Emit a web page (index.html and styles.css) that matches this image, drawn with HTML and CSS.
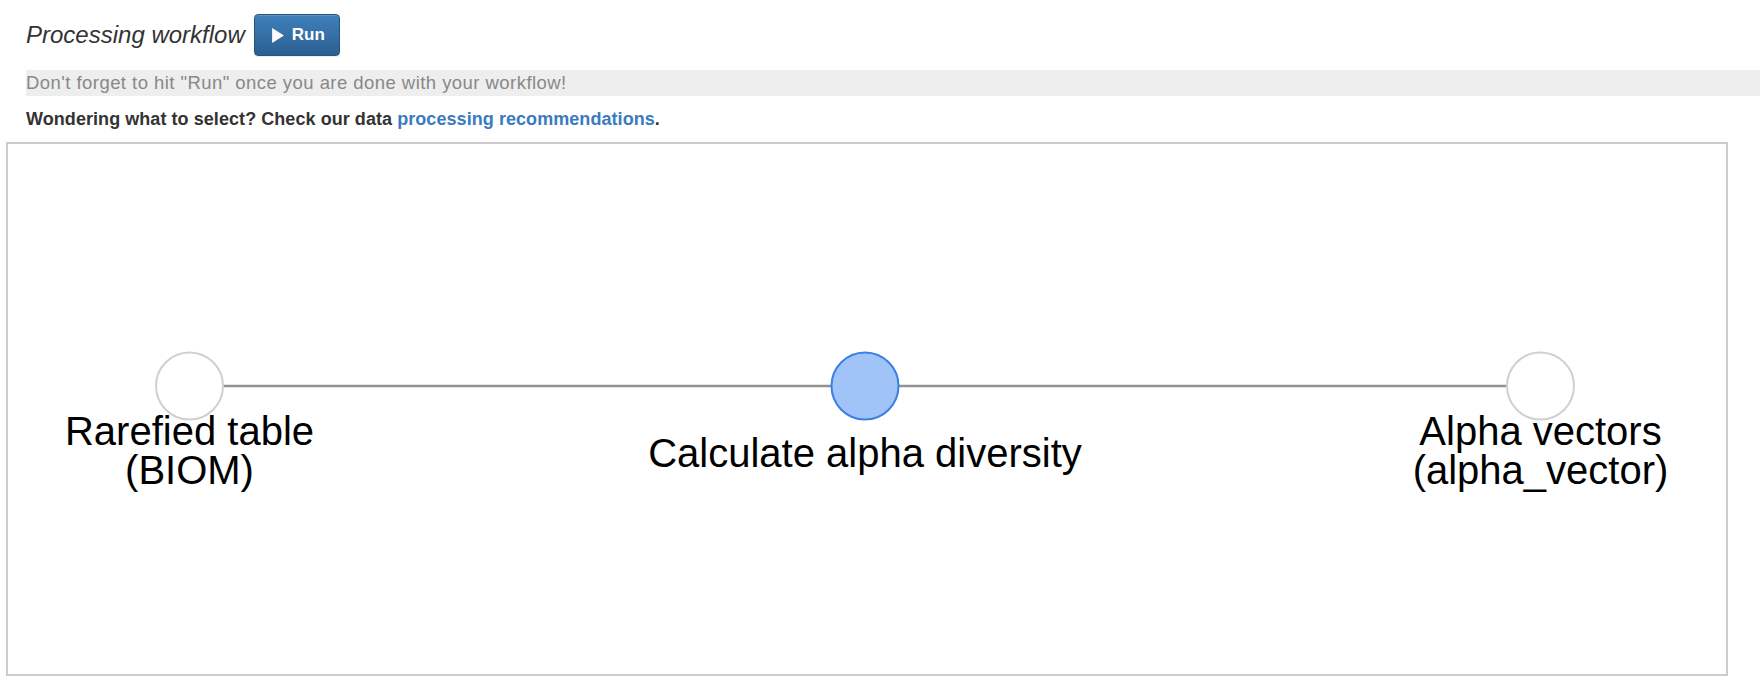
FILE: index.html
```html
<!DOCTYPE html>
<html>
<head>
<meta charset="utf-8">
<title>Processing workflow</title>
<link rel="stylesheet" href="styles.css">
</head>
<body>
<div class="page">
  <div class="header">
    <span class="title">Processing workflow</span>
    <button class="btn-run" type="button"><svg class="play" viewBox="0 0 11 14" width="12" height="15"><polygon points="0,0 11,7 0,14"/></svg><span>Run</span></button>
  </div>
  <div class="notice">Don't forget to hit "Run" once you are done with your workflow!</div>
  <p class="hint">Wondering what to select? Check our data <a href="#">processing recommendations</a>.</p>
</div>
<div class="graph">
  <svg class="graph-svg" viewBox="0 0 1718 530" width="1718" height="530">
    <line class="edge" x1="181.5" y1="242" x2="857" y2="242"/>
    <line class="edge" x1="857" y1="242" x2="1532.5" y2="242"/>
    <circle class="node" cx="181.5" cy="242" r="33.5"/>
    <circle class="node node-active" cx="857" cy="242" r="33.5"/>
    <circle class="node" cx="1532.5" cy="242" r="33.5"/>
    <text class="label" x="181.5" y="301">Rarefied table</text>
    <text class="label" x="181.5" y="340">(BIOM)</text>
    <text class="label" x="857" y="323">Calculate alpha diversity</text>
    <text class="label" x="1532.5" y="301">Alpha vectors</text>
    <text class="label" x="1532.5" y="340">(alpha_vector)</text>
  </svg>
</div>
</body>
</html>
```
FILE: styles.css
```css
html, body {
  margin: 0;
  padding: 0;
  background: #fff;
}
body {
  font-family: "Liberation Sans", Arial, Helvetica, sans-serif;
  color: #333;
}
.page {
  padding-left: 26px;
}
.header {
  display: flex;
  align-items: baseline;
  padding-top: 14px;
}
.title {
  font-size: 24px;
  font-style: italic;
  color: #333;
  margin-right: 9px;
}
.btn-run {
  display: inline-flex;
  align-items: center;
  box-sizing: border-box;
  height: 42px;
  padding: 0 14px 0 17px;
  border: 1px solid #245580;
  border-radius: 4px;
  background: linear-gradient(to bottom, #4080bc 0%, #2b5f91 100%);
  color: #fff;
  font-family: "Liberation Sans", Arial, sans-serif;
  font-size: 17px;
  font-weight: bold;
  box-shadow: inset 0 1px 0 rgba(255,255,255,0.15), 0 1px 1px rgba(0,0,0,0.075);
}
.play {
  fill: #fff;
  margin-right: 8px;
}
.notice {
  margin-top: 14px;
  height: 26px;
  line-height: 26px;
  font-size: 18.5px;
  letter-spacing: 0.45px;
  color: #888;
  background: #eee;
  white-space: nowrap;
}
.hint {
  margin: 10px 0 0;
  line-height: 26px;
  font-size: 18px;
  letter-spacing: 0.06px;
  font-weight: bold;
  color: #333;
}
.hint a {
  color: #3a7bbf;
  text-decoration: none;
}
.graph {
  margin: 10px 0 0 6px;
  width: 1718px;
  height: 530px;
  border: 2px solid #ccc;
}
.graph-svg {
  display: block;
}
.edge {
  stroke: #929292;
  stroke-width: 2.4;
}
.node {
  fill: #fff;
  stroke: #d0d0d0;
  stroke-width: 2;
}
.node-active {
  fill: #a0c4f7;
  stroke: #3b7fe6;
}
.label {
  font-family: "Liberation Sans", Arial, sans-serif;
  font-size: 40px;
  fill: #000;
  text-anchor: middle;
}
```
